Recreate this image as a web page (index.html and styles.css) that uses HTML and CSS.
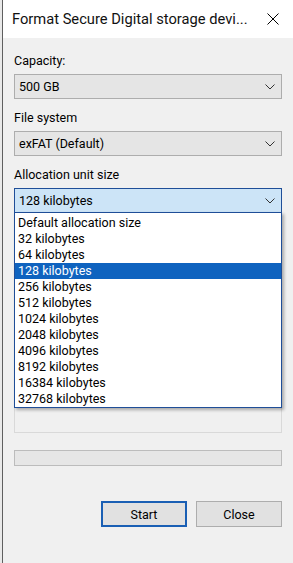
FILE: index.html
```html
<!DOCTYPE html>
<html lang="en">
<head>
    <meta charset="UTF-8">
    <meta name="viewport" content="width=device-width, initial-scale=1.0">
    <title>Format Secure Digital storage device</title>
    <link rel="stylesheet" href="styles.css">
</head>
<body>
    <div class="window">
        <div class="titlebar">
            <span class="title">Format Secure Digital storage devi...</span>
            <svg class="close-icon" width="12" height="12" viewBox="0 0 12 12">
                <path d="M0.5 0.5 L11.5 11.5 M11.5 0.5 L0.5 11.5" stroke="#000" stroke-width="1" fill="none"/>
            </svg>
        </div>

        <div class="content">
            <div class="label">Capacity:</div>
            <div class="combo">
                <span>500 GB</span>
                <svg class="chevron" width="10" height="6" viewBox="0 0 10 6"><path d="M0.5 0.5 L5 5 L9.5 0.5" stroke="#333" fill="none"/></svg>
            </div>

            <div class="label">File system</div>
            <div class="combo">
                <span>exFAT (Default)</span>
                <svg class="chevron" width="10" height="6" viewBox="0 0 10 6"><path d="M0.5 0.5 L5 5 L9.5 0.5" stroke="#333" fill="none"/></svg>
            </div>

            <div class="label">Allocation unit size</div>
            <div class="field-open">
                <div class="combo combo-focus">
                    <span>128 kilobytes</span>
                    <svg class="chevron" width="10" height="6" viewBox="0 0 10 6"><path d="M0.5 0.5 L5 5 L9.5 0.5" stroke="#333" fill="none"/></svg>
                </div>
                <ul class="dropdown">
                    <li>Default allocation size</li>
                    <li>32 kilobytes</li>
                    <li>64 kilobytes</li>
                    <li class="selected">128 kilobytes</li>
                    <li>256 kilobytes</li>
                    <li>512 kilobytes</li>
                    <li>1024 kilobytes</li>
                    <li>2048 kilobytes</li>
                    <li>4096 kilobytes</li>
                    <li>8192 kilobytes</li>
                    <li>16384 kilobytes</li>
                    <li>32768 kilobytes</li>
                </ul>
            </div>

            <div class="group"></div>

            <div class="progress"></div>

            <div class="buttons">
                <button class="btn btn-default">Start</button>
                <button class="btn">Close</button>
            </div>
        </div>
    </div>
</body>
</html>
```

FILE: styles.css
```css
body {
    margin: 0;
    background: #e9e9e9;
    font-family: Roboto, "Liberation Sans", sans-serif;
    color: #000;
    overflow: hidden;
}

.window {
    margin-left: 2px;
    height: 563px;
    background: #f0f0f0;
    border-left: 1px solid #5f5f5f;
}

.titlebar {
    height: 38px;
    background: #fff;
    display: flex;
    align-items: center;
    justify-content: space-between;
    padding: 0 14px 0 9px;
}

.title {
    font-size: 14.7px;
    color: #111;
    white-space: nowrap;
}

.close-icon {
    display: block;
}

.content {
    padding: 15px 11px 0;
}

.label {
    font-size: 12.5px;
    line-height: 16px;
    margin-bottom: 5px;
}

.combo {
    height: 25px;
    box-sizing: border-box;
    border: 1px solid #adadad;
    background: #e5e5e5;
    display: flex;
    align-items: center;
    justify-content: space-between;
    padding: 0 6px 0 4px;
    font-size: 12.5px;
    margin-bottom: 11px;
}

.chevron {
    display: block;
}

.field-open {
    position: relative;
}

.combo-focus {
    background: #cce4f7;
    border-color: #1f4e98;
    margin-bottom: 0;
}

.dropdown {
    position: absolute;
    top: 100%;
    left: 0;
    right: 0;
    margin: -1px 0 0;
    padding: 2px 0 0;
    list-style: none;
    background: #fff;
    border: 1px solid #1f4e98;
    box-shadow: 2px 2px 3px rgba(0, 0, 0, 0.3);
    z-index: 5;
}

.dropdown li {
    height: 16px;
    line-height: 16px;
    font-size: 12.5px;
    padding-left: 3px;
    white-space: nowrap;
}

.dropdown li.selected {
    background: #0f63bf;
    color: #fff;
}

.group {
    margin-top: 16px;
    height: 202px;
    border: 1px solid #d9d9d9;
}

.progress {
    margin-top: 17px;
    height: 16px;
    box-sizing: border-box;
    border: 1px solid #bcbcbc;
    background: #e6e6e6;
}

.buttons {
    margin-top: 35px;
    display: flex;
    justify-content: flex-end;
    gap: 9px;
}

.btn {
    width: 86px;
    height: 26px;
    box-sizing: border-box;
    border: 1px solid #adadad;
    background: #e1e1e1;
    font-family: inherit;
    font-size: 12.5px;
    color: #000;
    padding: 0;
}

.btn-default {
    border: 2px solid #1a5fb4;
}
```
